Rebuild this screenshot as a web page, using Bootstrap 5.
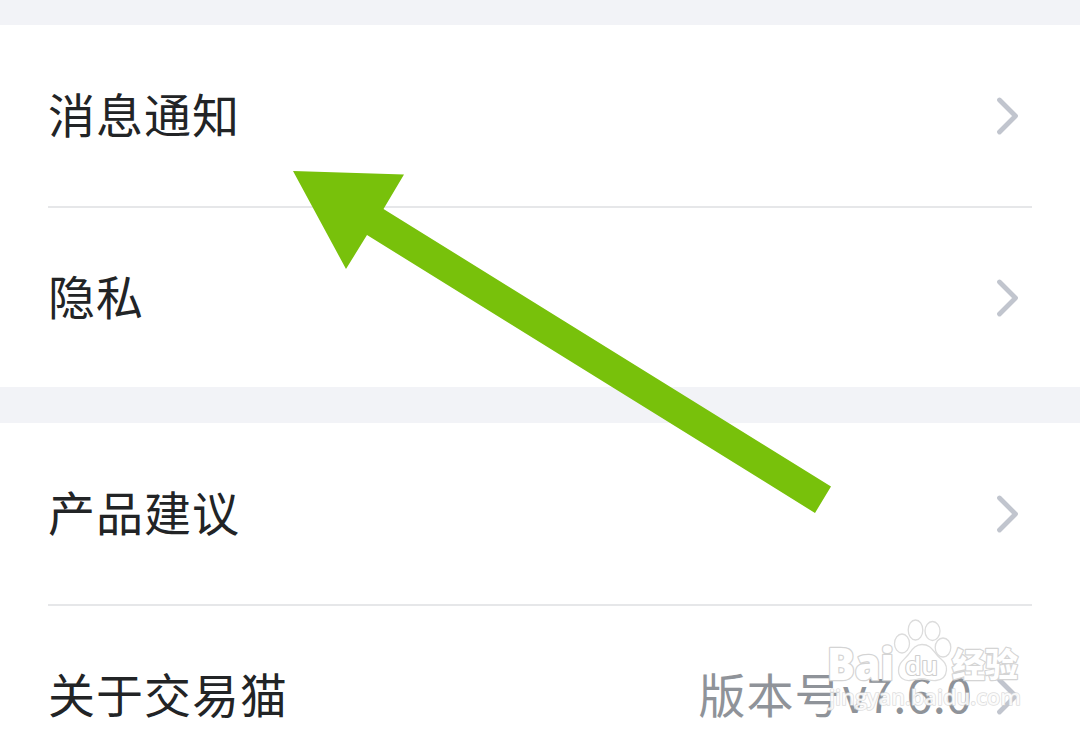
<!DOCTYPE html>
<html lang="zh-CN">
<head>
    <meta charset="UTF-8">
    <meta name="viewport" content="width=device-width, initial-scale=1.0">
    <title>设置</title>
    <link href="https://cdn.jsdelivr.net/npm/bootstrap@5.3.0/dist/css/bootstrap.min.css" rel="stylesheet">
    <style>
        body {
            background: #f2f3f7;
            color: #222426;
            font-family: "Noto Sans CJK SC", sans-serif;
            font-size: 47px;
            letter-spacing: 1px;
            line-height: 1;
        }

        .settings-page {
            height: 735px;
            padding-top: 25px;
        }

        .settings-group {
            background: #fff;
            padding: 0 48px;
            margin-bottom: 36px;
        }

        .settings-row {
            height: 181px;
            padding-right: 11px;
            padding-bottom: 6px;
            color: inherit;
        }

        .settings-row + .settings-row {
            border-top: 2px solid #e6e7e9;
        }

        .version {
            color: #8f9399;
            margin-right: 23px;
        }

        .version-number {
            letter-spacing: .1px;
        }

        .chevron {
            width: 26px;
            height: 40px;
            margin-top: 7px;
            fill: none;
            stroke: #c1c5ce;
            stroke-width: 4.8;
            stroke-linecap: round;
            stroke-linejoin: round;
        }

        .overlay {
            pointer-events: none;
            letter-spacing: 0;
        }
    </style>
</head>
<body>

<div class="settings-page position-relative overflow-hidden">
    <div class="settings-group">
        <a href="#" class="settings-row d-flex align-items-center text-decoration-none">
            <span class="flex-grow-1">消息通知</span>
            <svg class="chevron" viewBox="0 0 26 40"><path d="M4.500 4 L20.500 20 L4.500 36"/></svg>
        </a>
        <a href="#" class="settings-row d-flex align-items-center text-decoration-none">
            <span class="flex-grow-1">隐私</span>
            <svg class="chevron" viewBox="0 0 26 40"><path d="M4.500 4 L20.500 20 L4.500 36"/></svg>
        </a>
    </div>

    <div class="settings-group">
        <a href="#" class="settings-row d-flex align-items-center text-decoration-none">
            <span class="flex-grow-1">产品建议</span>
            <svg class="chevron" viewBox="0 0 26 40"><path d="M4.500 4 L20.500 20 L4.500 36"/></svg>
        </a>
        <a href="#" class="settings-row d-flex align-items-center text-decoration-none">
            <span class="flex-grow-1">关于交易猫</span>
            <span class="version">版本号<span class="version-number">v7.6.0</span></span>
            <svg class="chevron" viewBox="0 0 26 40"><path d="M4.500 4 L20.500 20 L4.500 36"/></svg>
        </a>
    </div>

    <!-- arrow and watermark lie over the list -->
    <svg class="overlay position-absolute top-0 start-0" width="1080" height="735" viewBox="0 0 1080 735">
        <polygon points="293,171 404,174.500 383.500,209 831,486.500 815,513 367,235 346,269" fill="#78c10b"/>
        <g fill="#fff" fill-opacity=".75" stroke="#dcdcdc" stroke-width="1.300" stroke-linejoin="round">
            <ellipse cx="902" cy="643.500" rx="7.500" ry="9.500"/>
            <ellipse cx="915.500" cy="630" rx="7.300" ry="10"/>
            <ellipse cx="932.500" cy="631" rx="7.500" ry="9.500"/>
            <ellipse cx="943" cy="647.500" rx="7.800" ry="9.500"/>
            <path d="M922 644.500 C915 644.500 912 650 908 655 C904 660 898 663 898.500 671 C899 678 904 681 910 680.500 C915 680 918 679 922 679 C927 679 930 681 936 680.500 C943 680 946 676 946.500 670 C947 662 941 660 937 655 C932 649 930 644.500 922 644.500 Z"/>
            <text x="827" y="679.500" font-family="Open Sans, sans-serif" font-weight="800" font-size="44" stroke="#d4d4d4" stroke-width="2.600" paint-order="stroke" fill-opacity="1" textLength="67" lengthAdjust="spacingAndGlyphs">Bai</text>
            <text x="905" y="675" font-family="Open Sans, sans-serif" font-weight="600" font-size="25" stroke="#cfcfcf" stroke-width="2.200" paint-order="stroke" fill-opacity="1" textLength="33" lengthAdjust="spacingAndGlyphs">du</text>
            <text x="952" y="677" font-family="Noto Sans CJK SC, sans-serif" font-weight="900" font-size="33" stroke="#d4d4d4" stroke-width="2.400" paint-order="stroke" fill-opacity="1" textLength="66" lengthAdjust="spacingAndGlyphs">经验</text>
            <text x="829" y="705" font-family="Open Sans, sans-serif" font-weight="600" font-size="22" stroke="#d0d0d0" stroke-opacity=".7" stroke-width="1.600" paint-order="stroke" fill-opacity=".85" textLength="192" lengthAdjust="spacingAndGlyphs">jingyan.baidu.com</text>
        </g>
    </svg>
</div>

<script src="https://cdn.jsdelivr.net/npm/bootstrap@5.3.0/dist/js/bootstrap.bundle.min.js"></script>
</body>
</html>
